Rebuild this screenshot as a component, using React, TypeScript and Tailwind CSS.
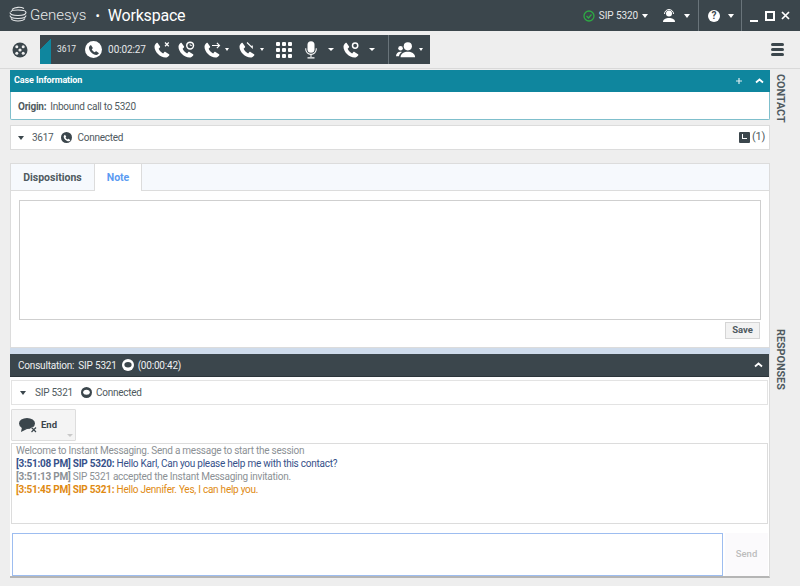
import type { ReactNode } from 'react';

const PHONE = 'M6.2 2.6 9.4 7.4c.3.5.2 1-.2 1.4L7.5 10.4c1.2 2.6 3.4 4.9 6 6.1l1.7-1.7c.4-.4.9-.5 1.4-.2l4.8 3.2c.5.3.6 1 .2 1.4-1.3 1.7-3 2.8-4.8 2.8C9.5 22 2 14.5 2 7.7c0-1.8 1.1-3.6 2.8-5 .4-.4 1-.4 1.4-.1z';

// carets come in three sizes, the caller gives margin and colour
const Caret = ({ className = '', size = 'md' }: { className?: string; size?: 'sm' | 'md' | 'lg' }) => {
  const dims = size === 'sm' ? 'border-x-[2px] border-t-[3px]' : size === 'md' ? 'border-x-[3px] border-t-[3px]' : 'border-x-[3.5px] border-t-[4px]';
  return <span className={'inline-block h-0 w-0 shrink-0 border-x-transparent ' + dims + ' ' + className} />;
};

const Phone = ({ size = 18, extra, className = '' }: { size?: number; extra?: ReactNode; className?: string }) => (
  <svg width={size} height={size} viewBox="0 0 24 24" className={'block shrink-0 ' + className}>
    <path d={PHONE} fill="#fff" />
    {extra}
  </svg>
);

const ChatBubble = ({ color = '#fff', inner = '#3b464c', size = 12 }: { color?: string; inner?: string; size?: number }) => (
  <svg width={size} height={size} viewBox="0 0 14 14" className="shrink-0">
    <circle cx="7" cy="7" r="7" fill={color} />
    <ellipse cx="7" cy="6.8" rx="4.2" ry="3.2" fill={inner} />
  </svg>
);

const UpChevron = () => (
  <svg width="9" height="6" viewBox="0 0 9 6">
    <path d="M1 4.5 4.5 1.5l3.5 3" fill="none" stroke="#fff" strokeWidth="1.8" />
  </svg>
);

function TitleBar() {
  return (
    <div className="flex h-[31px] items-center bg-[#3b464c] text-white">
      <svg width="18" height="17" viewBox="0 0 18 17" className="ml-[9px] mt-[-2px]" fill="none" stroke="#e6e8e9" strokeWidth="1.1">
        <path d="M3 3.5C6 .8 12 .8 15 2.5" />
        <path d="M1 6.5c0 1.7 3.5 3 8 3s8-1.3 8-3-3.5-2.5-8-2.5-7 .8-7 2" />
        <path d="M1 9.5c0 1.7 3.5 3 8 3s8-1.3 8-3" />
        <path d="M2 12.5c1 1.5 4 2.5 7 2.5s6-1 7-2.5" />
      </svg>
      <span className="ml-[3px] text-[15px] font-light text-[#e6e8e9]">Genesys</span>
      <span className="ml-[9px] text-[13px]">•</span>
      <span className="ml-[8px] text-[16px] tracking-[-0.2px]">Workspace</span>
      <div className="ml-auto flex h-full items-center">
        <svg width="12" height="12" viewBox="0 0 12 12" fill="none" stroke="#2eaa44" strokeWidth="1.3">
          <circle cx="6" cy="6" r="5" />
          <path d="m3.5 6 2 2 3-3.5" />
        </svg>
        <span className="ml-[4px] text-[10px] tracking-[-0.1px] text-[#e6e8e9]">SIP 5320</span>
        <Caret size="lg" className="ml-[4px] border-t-white" />
        <svg width="14" height="15" viewBox="0 0 14 15" className="ml-[14px]" fill="#fff">
          <circle cx="7" cy="5.5" r="3" />
          <path d="M2.5 6A4.5 4.5 0 0 1 11.5 6" fill="none" stroke="#fff" />
          <path d="M1 14c0-3 3-4 6-4s6 1 6 4z" />
        </svg>
        <Caret size="lg" className="ml-[8px] border-t-white" />
        <div className="ml-[8px] h-full w-px bg-[#69747a]" />
        <span className="ml-[9px] flex h-[12px] w-[12px] items-center justify-center rounded-full bg-white text-[10px] font-bold leading-none text-[#3b464c]">?</span>
        <Caret size="lg" className="ml-[8px] border-t-white" />
        <div className="ml-[7px] h-full w-px bg-[#69747a]" />
        <div className="ml-[8px] mt-[11px] h-[2px] w-[8px] bg-white" />
        <div className="ml-[7px] h-[10px] w-[10px] border-2 border-white" />
        <svg width="9" height="9" viewBox="0 0 9 9" className="ml-[6px] mr-[10px]">
          <path d="m1 1 7 7M8 1 1 8" stroke="#fff" strokeWidth="1.7" />
        </svg>
      </div>
    </div>
  );
}

function CallToolbar() {
  return (
    <div className="flex h-[38px] items-center border-b border-[#d9d9d9] bg-[#eeeeee]">
      <svg width="16" height="16" viewBox="0 0 16 16" className="ml-[12px] mr-[12px]">
        <circle cx="8" cy="8" r="7.5" fill="#3b464c" />
        <circle cx="8" cy="8" r="1.6" fill="#eee" />
        <circle cx="4.8" cy="4.8" r="1.5" fill="#eee" />
        <circle cx="11.2" cy="4.8" r="1.5" fill="#eee" />
        <circle cx="4.8" cy="11.2" r="1.5" fill="#eee" />
        <circle cx="11.2" cy="11.2" r="1.5" fill="#eee" />
      </svg>
      <div className="flex h-[29px] w-[390px] items-center bg-[#3b464c] text-white">
        <div className="h-full w-[11px] bg-[linear-gradient(135deg,#3b464c_0,#3b464c_35%,#0f869e_36%)]" />
        <span className="ml-[6px] text-[8.5px] text-[#e6e8e9]">3617</span>
        <span className="ml-[9px] flex h-[17px] w-[17px] shrink-0 items-center justify-center rounded-full bg-white">
          <svg width="12" height="12" viewBox="0 0 24 24"><path d={PHONE} fill="#3b464c" /></svg>
        </span>
        <span className="ml-[6px] text-[10px] tracking-[-0.1px] text-[#e6e8e9]">00:02:27</span>
        <Phone className="ml-[7px]" extra={<path d="m16 2 5 5m0-5-5 5" stroke="#fff" strokeWidth="1.6" />} />
        <Phone className="ml-[6px]" extra={<><circle cx="17.5" cy="6" r="4.5" fill="none" stroke="#fff" strokeWidth="2" /><path d="M17.5 3.5V6h2.5" stroke="#fff" fill="none" /></>} />
        <Phone className="ml-[8px]" extra={<path d="M12 6h10m-3.5-3.5L22 6l-3.5 3.5" stroke="#fff" strokeWidth="1.6" fill="none" />} />
        <Caret size="sm" className="ml-[4px] border-t-white" />
        <Phone className="ml-[9px]" extra={<path d="M12 2l7 7v-3" stroke="#fff" strokeWidth="1.5" fill="none" />} />
        <Caret size="sm" className="ml-[4px] border-t-white" />
        <div className="ml-[12px] grid grid-cols-[4px_4px_4px] gap-[2px]">
          {Array.from({ length: 9 }).map((_, i) => (
            <span key={i} className="h-[4px] w-[4px] rounded-[1px] bg-white" />
          ))}
        </div>
        <svg width="14" height="20" viewBox="0 0 16 20" className="ml-[12px] shrink-0">
          <rect x="4" y="0" width="8" height="13" rx="4" fill="#fff" />
          <path d="M2 8v1a6 6 0 0 0 12 0V8" fill="none" stroke="#fff" strokeWidth="1.2" />
          <path d="M8 15v3M4 19h8" stroke="#fff" strokeWidth="1.2" />
        </svg>
        <Caret size="md" className="ml-[10px] border-t-white" />
        <Phone className="ml-[8px]" extra={<circle cx="17.5" cy="6" r="3.5" fill="none" stroke="#fff" strokeWidth="2" />} />
        <Caret size="md" className="ml-[9px] border-t-white" />
        <div className="ml-[13px] h-full w-px bg-[#69747a]" />
        <svg width="20" height="18" viewBox="0 0 22 18" className="ml-[7px] shrink-0" fill="#fff">
          <circle cx="13" cy="5" r="4.5" />
          <path d="M5 17c0-4 4-6 8-6s8 2 8 6z" />
          <circle cx="5" cy="7" r="2.5" />
          <path d="M0 16c0-3 2-5 5-5 .5 0 1 0 1.5.2C4.5 12.5 3.5 14 3.3 16z" />
        </svg>
        <Caret size="sm" className="ml-[3px] border-t-white" />
      </div>
      <div className="ml-auto mr-[16px] flex flex-col gap-[2.5px]">
        <span className="h-[2.5px] w-[13px] rounded-full bg-[#3b464c]" />
        <span className="h-[2.5px] w-[13px] rounded-full bg-[#3b464c]" />
        <span className="h-[2.5px] w-[13px] rounded-full bg-[#3b464c]" />
      </div>
    </div>
  );
}

function CaseInfo() {
  return (
    <div className="rounded-b-[2px] border border-t-0 border-[#7fbfcc] bg-white">
      <div className="-mx-px flex h-[22px] items-center justify-between bg-[#0f869e] pl-[4px] pr-[6px] text-white">
        <span className="text-[9px] font-bold tracking-[-0.1px]">Case Information</span>
        <div className="flex items-center gap-[12px]">
          <svg width="8" height="8" viewBox="0 0 8 8"><path d="M4 1v6M1 4h6" stroke="#dcecef" strokeWidth="1.2" /></svg>
          <UpChevron />
        </div>
      </div>
      <div className="flex h-[27px] items-center gap-[4px] pl-[7px] pt-[1px] text-[10px] tracking-[-0.25px] text-[#4f5a60]">
        <b className="font-bold">Origin:</b>
        <span>Inbound call to 5320</span>
      </div>
    </div>
  );
}

function CallRow() {
  return (
    <div className="mt-[5px] flex h-[25px] items-center border border-[#dcdcdc] bg-white pl-[7px] pr-[4px] text-[10px] tracking-[-0.25px] text-[#4f5a60]">
      <Caret size="lg" className="border-t-[#3b464c]" />
      <span className="ml-[8px]">3617</span>
      <span className="ml-[8px] flex h-[11px] w-[11px] items-center justify-center rounded-full bg-[#3b464c]">
        <svg width="8" height="8" viewBox="0 0 24 24"><path d={PHONE} fill="#fff" /></svg>
      </span>
      <span className="ml-[5px]">Connected</span>
      <span className="relative ml-auto h-[11px] w-[11px] rounded-[1px] bg-[#3b464c]">
        <span className="absolute left-[3px] top-[2px] h-[5px] w-[5px] border-b-[1.5px] border-l-[1.5px] border-white" />
      </span>
      <span className="ml-[2px] text-[11px]">(1)</span>
    </div>
  );
}

function NotePanel() {
  return (
    <div className="mt-[13px] flex h-[185px] flex-col border border-[#dcdcdc] bg-white">
      <div className="flex h-[27px] border-b border-[#dcdcdc] bg-[#f6f9fd] text-[10.5px] font-bold">
        <div className="flex w-[83px] items-center justify-center pt-[1px] text-[#4f5a60]">Dispositions</div>
        <div className="-mb-px flex w-[48px] items-center justify-center border-x border-[#dcdcdc] bg-white pt-[1px] text-[#5b9bf2]">Note</div>
      </div>
      <div className="mx-[8px] mt-[9px] h-[120px] border border-[#cfcfcf] bg-white" />
      <div className="mr-[9px] mt-[2px] flex justify-end">
        <button className="flex h-[17px] w-[35px] items-center justify-center border border-[#d5d5d5] bg-[#f2f2f2] text-[9.5px] font-bold text-[#4f5a60]">Save</button>
      </div>
    </div>
  );
}

function Consultation() {
  return (
    <div className="flex h-[224px] flex-col border-b-2 border-r border-b-[#b5b5b5] border-r-[#dcdcdc] bg-white">
      <div className="flex h-[23px] shrink-0 items-center justify-between border-b border-[#2c353a] bg-[#3b464c] pl-[8px] pr-[6px] text-[10px] tracking-[-0.2px] text-[#eef0f1]">
        <div className="flex items-center gap-[4px]">
          <span>Consultation:</span>
          <span>SIP 5321</span>
          <span className="ml-[1px]"><ChatBubble size={12} /></span>
          <span>(00:00:42)</span>
        </div>
        <UpChevron />
      </div>
      <div className="ml-[1px] mr-px mt-[3px] flex h-[25px] shrink-0 items-center border border-[#e3e3e3] pl-[8px] text-[10px] tracking-[-0.25px] text-[#4f5a60]">
        <Caret size="lg" className="border-t-[#3b464c]" />
        <span className="ml-[9px]">SIP 5321</span>
        <span className="ml-[8px]"><ChatBubble size={11} color="#3b464c" inner="#fff" /></span>
        <span className="ml-[4px]">Connected</span>
      </div>
      <button className="relative ml-[1px] mt-[4px] flex h-[32px] w-[65px] shrink-0 items-center rounded-[1px] border border-[#dddddd] bg-[#f4f4f4] pl-[7px] text-[9.5px] font-bold text-[#3b464c]">
        <svg width="19" height="16" viewBox="0 0 19 16" className="mr-[3px]" fill="#3b464c">
          <ellipse cx="8" cy="6.5" rx="8" ry="5.5" />
          <path d="M3 10 2 15l6-3z" />
          <path d="m12 11 5 4.5m0-4.5-5 4.5" stroke="#f4f4f4" strokeWidth="3.2" />
          <path d="m12.5 10.5 4.5 4.5m0-4.5L12.5 15" stroke="#3b464c" strokeWidth="1.2" />
        </svg>
        End
        <span className="absolute bottom-[3px] right-[2px] h-0 w-0 border-x-[3px] border-t-[3px] border-x-transparent border-t-[#c9c9c9]" />
      </button>
      <div className="ml-[1px] mr-px mt-[2px] h-[81px] shrink-0 border border-[#dcdcdc] pl-[4px] text-[10px] leading-[13px] tracking-[-0.25px] text-[#8c9195]">
        <div>Welcome to Instant Messaging. Send a message to start the session</div>
        <div className="text-[#36518a]"><b>[3:51:08 PM] SIP 5320:</b> Hello Karl, Can you please help me with this contact?</div>
        <div><b>[3:51:13 PM]</b> SIP 5321 accepted the Instant Messaging invitation.</div>
        <div className="text-[#e08a12]"><b>[3:51:45 PM] SIP 5321:</b> Hello Jennifer. Yes, I can help you.</div>
      </div>
      <div className="ml-[2px] mr-px mt-[9px] flex h-[43px] gap-[2px]">
        <div className="h-[43px] w-[711px] border border-[#9dbdf0] bg-white" />
        <div className="flex flex-1 items-center justify-center bg-[#fbfafc] text-[9.5px] font-medium text-[#bdbdbd]">Send</div>
      </div>
    </div>
  );
}

export default function App() {
  return (
    <div className="flex h-[586px] w-[800px] flex-col overflow-hidden bg-[#eeeeee] font-['Roboto',sans-serif]">
      <TitleBar />
      <CallToolbar />
      <div className="flex flex-1">
        <div className="ml-[10px] mt-[1px] w-[760px]">
          <CaseInfo />
          <CallRow />
          <NotePanel />
          <div className="h-[6px] bg-[#cfdcec]" />
          <Consultation />
        </div>
        <div className="relative flex-1 text-[10.75px] font-bold text-[#4f5a60]">
          <span className="absolute left-[2px] top-[5px] [writing-mode:vertical-rl]">CONTACT</span>
          <span className="absolute left-[2px] top-[260px] [writing-mode:vertical-rl]">RESPONSES</span>
        </div>
      </div>
    </div>
  );
}
